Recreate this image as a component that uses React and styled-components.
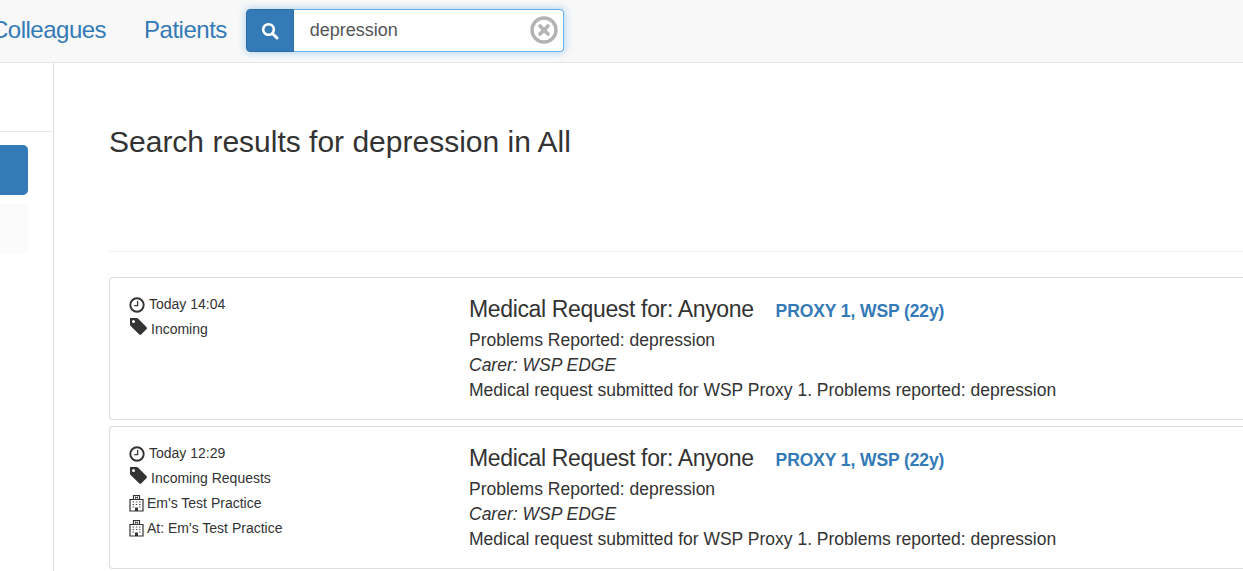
import React from "react";
import styled, { createGlobalStyle } from "styled-components";

const Global = createGlobalStyle`
  html, body { margin: 0; padding: 0; background: #fff; overflow: hidden; }
  body { font-family: "Liberation Sans", Arial, sans-serif; color: #333; font-size: 16px; }
  * { box-sizing: border-box; }
`;
const Page = styled.div`width: 1243px; height: 571px; overflow: hidden;`;
const NavBar = styled.nav`
  height: 63px; background: #f8f8f8; border-bottom: 1px solid #e7e7e7;
  display: flex; align-items: flex-start; padding-top: 9px; overflow: hidden;
`;
const NavLink = styled.a`
  color: #337ab7; font-size: 24px; line-height: 42px; letter-spacing: -0.5px; margin-left: ${p => p.$ml}px; white-space: nowrap;
`;
const Search = styled.div`
  display: flex; width: 318px; height: 43px; margin-left: 19px; border-radius: 4px;
  box-shadow: 0 0 8px rgba(102,175,233,.6);
`;
const SearchBtn = styled.div`
  width: 48px; background: #337ab7; border: 1px solid #2e6da4; border-radius: 4px 0 0 4px;
  display: flex; align-items: center; justify-content: center;
`;
const SearchBox = styled.div`
  flex: 1; position: relative; background: #fff; border: 1px solid #66afe9; border-left: 0; border-radius: 0 4px 4px 0;
  padding-left: 16px; font-size: 18px; line-height: 40px; color: #555;
`;
const Clear = styled.svg`position: absolute; right: 5px; top: 6px;`;
const Body = styled.div`display: flex; height: 508px;`;
const Side = styled.aside`width: 54px; border-right: 1px solid #ddd; flex: none;`;
const SideHead = styled.div`height: 69px; border-bottom: 1px solid #e7e7e7; margin-bottom: 13px;`;
const SideItem = styled.div`
  width: 28px; height: 50px; border-radius: 0 5px 5px 0; background: ${p => p.$active ? "#337ab7" : "#fbfbfb"}; margin-bottom: 9px;
`;
const Main = styled.main`flex: 1; padding-left: 55px; min-width: 0;`;
const Title = styled.h1`
  font-weight: 400; font-size: 30px; line-height: 33px; margin: 62px 0 0; color: #333;
`;
const Rule = styled.hr`border: 0; border-top: 1px solid #eee; margin: 93px 0 25px;`;
const Card = styled.article`
  display: flex; border: 1px solid #ddd; border-right: 0; border-radius: 4px 0 0 4px;
  height: ${p => p.$h}px; margin-bottom: 6px; padding: 14px 0 0 19px;
`;
const Meta = styled.div`width: 340px; flex: none; font-size: 14px;`;
const MetaRow = styled.div`height: 25px; line-height: 25px; display: flex; align-items: center; gap: ${p => p.$gap ?? 4}px; white-space: nowrap;`;
const Content = styled.div`flex: 1; min-width: 0;`;
const Heading = styled.div`display: flex; align-items: baseline; height: 36px; line-height: 34px;`;
const Subject = styled.span`font-size: 23px; letter-spacing: -0.35px; color: #333;`;
const Patient = styled.a`font-size: 17.5px; font-weight: 700; color: #337ab7; margin-left: 22px; letter-spacing: -0.1px;`;
const Line = styled.div`font-size: 17.5px; line-height: 25px; color: #333; white-space: nowrap; font-style: ${p => p.$it ? "italic" : "normal"};`;

const Clock = () => (
  <svg width="16" height="16" viewBox="0 0 16 16"><circle cx="8" cy="8" r="6.7" fill="none" stroke="#333" strokeWidth="1.9"/><path d="M8.6 4v4.7H5.3" fill="none" stroke="#333" strokeWidth="1.3"/></svg>
);
const Tag = () => (
  <svg width="19" height="19" viewBox="0 0 19 19" style={{marginTop:-6}}><path fillRule="evenodd" fill="#333" d="M1 1h6.6c.6 0 1 .2 1.4.6l8.4 8.4c.7.7.7 1.6 0 2.300l-5 5c-.7.7-1.600.7-2.300 0L1.600 9c-.4-.4-.6-.8-.6-1.400zM4.500 3a1.500 1.500 0 1 0 0 3 1.500 1.500 0 0 0 0-3z"/></svg>
);
const Hospital = () => (
  <svg width="15" height="18" viewBox="0 0 15 18" style={{marginTop:-1}}>
    <path d="M1 5.500h13V17H1z" fill="#fff" stroke="#333" strokeWidth="1.200"/>
    <path d="M4.500 5V1.500h6V5" fill="#fff" stroke="#333" strokeWidth="1.200"/>
    <path d="M6.500 2.500v2.200M8.500 2.500v2.200M6.500 3.600h2" stroke="#333" strokeWidth=".9"/>
    <path d="M3.500 8h1.500M6.800 8h1.500M10 8h1.500M3.500 10.500h1.500M6.800 10.500h1.500M10 10.500h1.500M3.500 13h1.500M10 13h1.500" stroke="#555" strokeWidth="1.100"/>
    <path d="M6 17v-3.500h3V17z" fill="#333"/>
  </svg>
);
const Results = [
  { h: 143, rows: [[Clock, "Today 14:04", 4], [Tag, "Incoming", 3]] },
  { h: 143, rows: [[Clock, "Today 12:29", 4], [Tag, "Incoming Requests", 3], [Hospital, "Em's Test Practice", 3], [Hospital, "At: Em's Test Practice", 3]] },
];

export default function App() {
  return (
    <Page>
      <Global />
      <NavBar>
        <NavLink $ml={-9}>Colleagues</NavLink>
        <NavLink $ml={38}>Patients</NavLink>
        <Search>
          <SearchBtn>
            <svg width="18" height="18" viewBox="0 0 18 18"><circle cx="7.500" cy="7.500" r="5.300" fill="none" stroke="#fff" strokeWidth="2.600"/><path d="M11.500 11.500l4.500 4.500" stroke="#fff" strokeWidth="3" strokeLinecap="round"/></svg>
          </SearchBtn>
          <SearchBox>
            depression
            <Clear width="28" height="28" viewBox="0 0 28 28">
              <circle cx="14" cy="14" r="12" fill="none" stroke="#b3b3b3" strokeWidth="3.400"/>
              <path d="M10 10l8 8M18 10l-8 8" stroke="#b3b3b3" strokeWidth="3.600" strokeLinecap="round"/>
            </Clear>
          </SearchBox>
        </Search>
      </NavBar>
      <Body>
        <Side>
          <SideHead />
          <SideItem $active />
          <SideItem />
        </Side>
        <Main>
          <Title>Search results for depression in All</Title>
          <Rule />
          {Results.map((r, i) => (
            <Card key={i} $h={r.h}>
              <Meta>
                {r.rows.map(([Icon, t, g], j) => (
                  <MetaRow key={j} $gap={g}><Icon />{t}</MetaRow>
                ))}
              </Meta>
              <Content>
                <Heading><Subject>Medical Request for: Anyone</Subject><Patient>PROXY 1, WSP (22y)</Patient></Heading>
                <Line>Problems Reported: depression</Line>
                <Line $it>Carer: WSP EDGE</Line>
                <Line>Medical request submitted for WSP Proxy 1. Problems reported: depression</Line>
              </Content>
            </Card>
          ))}
        </Main>
      </Body>
    </Page>
  );
}
